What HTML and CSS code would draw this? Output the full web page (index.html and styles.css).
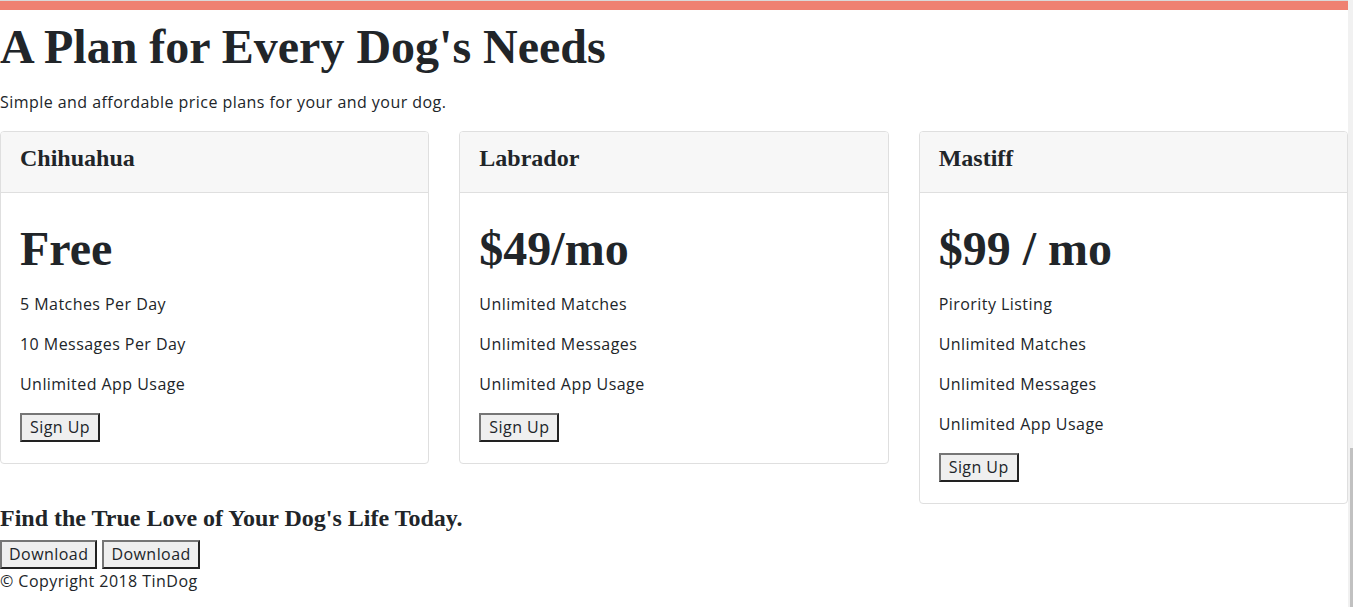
FILE: index.html
```html
<!DOCTYPE html>
<html lang="en">
<head>
<meta charset="utf-8">
<title>TinDog Pricing</title>
<link rel="stylesheet" href="styles.css">
</head>
<body>
<div class="page">
  <main class="main">
    <div class="top-band"></div>
    <section class="pricing">
      <h1 class="title">A Plan for Every Dog's Needs</h1>
      <p class="lead">Simple and affordable price plans for your and your dog.</p>
      <div class="row">
        <div class="col">
          <div class="card">
            <div class="card-header"><h3 class="plan">Chihuahua</h3></div>
            <div class="card-body">
              <h2 class="price">Free</h2>
              <p>5 Matches Per Day</p>
              <p>10 Messages Per Day</p>
              <p>Unlimited App Usage</p>
              <button class="btn" type="button">Sign Up</button>
            </div>
          </div>
        </div>
        <div class="col">
          <div class="card">
            <div class="card-header"><h3 class="plan">Labrador</h3></div>
            <div class="card-body">
              <h2 class="price">$49/mo</h2>
              <p>Unlimited Matches</p>
              <p>Unlimited Messages</p>
              <p>Unlimited App Usage</p>
              <button class="btn" type="button">Sign Up</button>
            </div>
          </div>
        </div>
        <div class="col">
          <div class="card">
            <div class="card-header"><h3 class="plan">Mastiff</h3></div>
            <div class="card-body">
              <h2 class="price">$99 / mo</h2>
              <p>Pirority Listing</p>
              <p>Unlimited Matches</p>
              <p>Unlimited Messages</p>
              <p>Unlimited App Usage</p>
              <button class="btn" type="button">Sign Up</button>
            </div>
          </div>
        </div>
      </div>
    </section>
    <section class="cta">
      <h3 class="cta-title">Find the True Love of Your Dog's Life Today.</h3>
      <div class="cta-buttons">
        <button class="btn" type="button">Download</button>
        <button class="btn" type="button">Download</button>
      </div>
    </section>
    <footer class="footer">
      <p>© Copyright 2018 TinDog</p>
    </footer>
  </main>
  <aside class="scrollbar"><div class="thumb"></div></aside>
</div>
</body>
</html>
```

FILE: styles.css
```css
html, body {
  margin: 0;
  padding: 0;
  height: 100%;
  overflow: hidden;
  background: #fff;
}

body {
  font-family: "Open Sans", "Noto Sans", sans-serif;
  font-size: 16px;
  line-height: 24px;
  letter-spacing: 0.45px;
  color: #212529;
}

.page {
  display: flex;
  height: 607px;
}

.main {
  flex: 1;
  min-width: 0;
  border-top: 1px solid #dadada;
}

.top-band {
  height: 9px;
  background: #ef8172;
}

.pricing {
  padding-top: 8px;
}

.title {
  font-family: "Liberation Serif", "Times New Roman", serif;
  font-size: 48px;
  line-height: 1.2;
  font-weight: bold;
  letter-spacing: 0;
  margin: 0 0 14px;
}

.lead {
  margin: 0 0 17px;
}

.row {
  display: flex;
  align-items: flex-start;
  margin: 0 -15px;
}

.col {
  flex: 1 1 0;
  padding: 0 15px;
}

.card {
  border: 1px solid #dfdfdf;
  border-radius: 4px;
  background: #fff;
  overflow: hidden;
}

.card-header {
  background: #f7f7f7;
  border-bottom: 1px solid #dfdfdf;
  padding: 12px 20px 12px 19px;
}

.plan {
  font-family: "Liberation Serif", "Times New Roman", serif;
  font-size: 24px;
  line-height: 1.2;
  font-weight: bold;
  letter-spacing: 0;
  margin: 0 0 8px;
}

.card-body {
  padding: 20px 20px 21px 19px;
}

.card-body p {
  margin: 0 0 16px;
}

.price {
  font-family: "Liberation Serif", "Times New Roman", serif;
  font-size: 48px;
  line-height: 1.2;
  font-weight: bold;
  letter-spacing: 0;
  margin: 7px 0 14px;
}

.btn {
  font-family: "Open Sans", "Noto Sans", sans-serif;
  font-size: 16px;
  letter-spacing: 0.45px;
  color: #212529;
  background: #efefef;
  border-width: 2px;
  border-style: solid;
  border-color: #767676 #222 #222 #767676;
  border-radius: 0;
  padding: 1px 7px;
  margin: 1px 0 0;
  height: 29px;
  line-height: 22px;
  vertical-align: top;
}

.card-body .btn {
  padding: 1px 8px;
}

.cta-title {
  font-family: "Liberation Serif", "Times New Roman", serif;
  font-size: 24px;
  line-height: 1.2;
  font-weight: bold;
  letter-spacing: 0;
  margin: 0 0 7px;
}

.cta-buttons {
  display: flex;
  gap: 5px;
}

.cta-buttons .btn {
  margin: 0;
}

.footer p {
  margin: 0;
  line-height: 24px;
}

.scrollbar {
  width: 5px;
  background: #f1f1f1;
  flex: none;
  display: flex;
  flex-direction: column;
}

.thumb {
  margin-top: 448px;
  margin-left: 2px;
  flex: 1;
  background: #c1c1c1;
}
```
